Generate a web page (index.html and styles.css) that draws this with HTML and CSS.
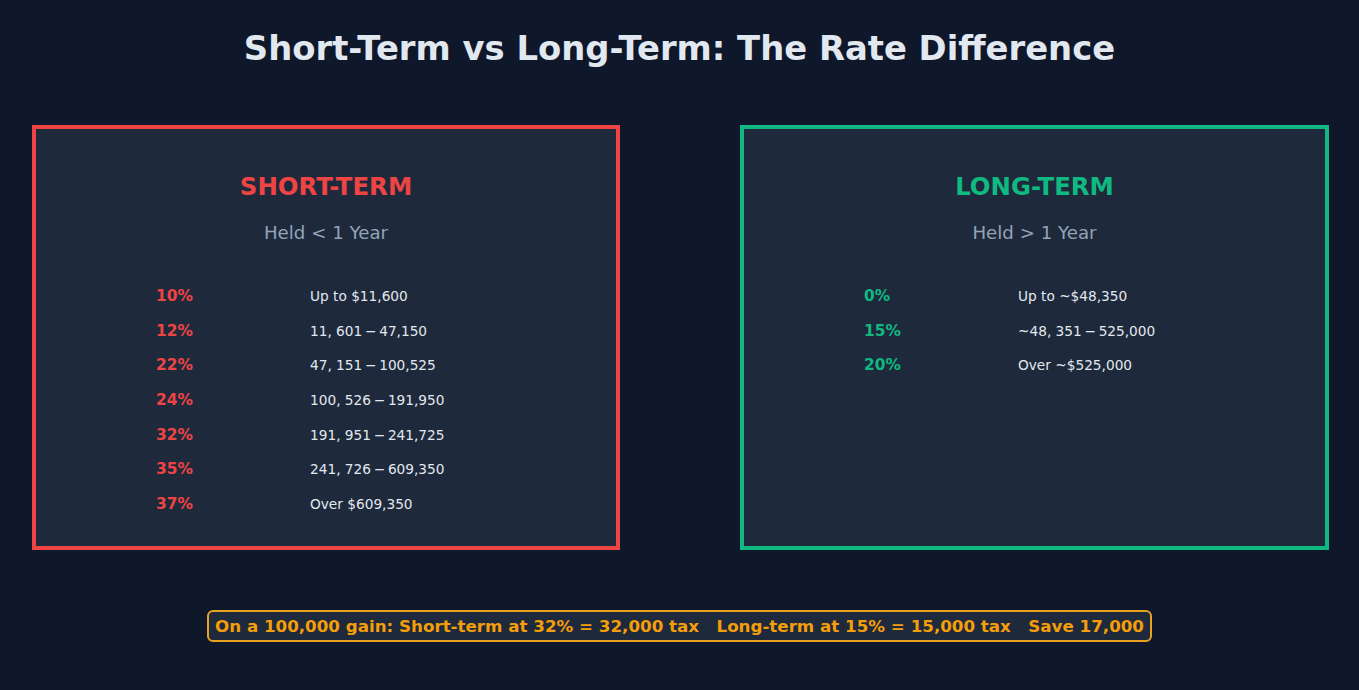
FILE: index.html
```html
<!DOCTYPE html>
<html>
<head>
<meta charset="utf-8">
<link rel="stylesheet" href="styles.css">
</head>
<body>
<div class="page">
  <h1 class="title">Short-Term vs Long-Term: The Rate Difference</h1>
  <div class="boxes">
    <section class="box box-short">
      <div class="heading">SHORT-TERM</div>
      <div class="sub">Held &lt; 1 Year</div>
      <div class="rows">
        <div class="row"><span class="pct">10%</span><span class="desc">Up to $11,600</span></div>
        <div class="row"><span class="pct">12%</span><span class="desc">11, 601&#8201;−&#8201;47,150</span></div>
        <div class="row"><span class="pct">22%</span><span class="desc">47, 151&#8201;−&#8201;100,525</span></div>
        <div class="row"><span class="pct">24%</span><span class="desc">100, 526&#8201;−&#8201;191,950</span></div>
        <div class="row"><span class="pct">32%</span><span class="desc">191, 951&#8201;−&#8201;241,725</span></div>
        <div class="row"><span class="pct">35%</span><span class="desc">241, 726&#8201;−&#8201;609,350</span></div>
        <div class="row"><span class="pct">37%</span><span class="desc">Over $609,350</span></div>
      </div>
    </section>
    <section class="box box-long">
      <div class="heading">LONG-TERM</div>
      <div class="sub">Held &gt; 1 Year</div>
      <div class="rows">
        <div class="row"><span class="pct">0%</span><span class="desc">Up to ~$48,350</span></div>
        <div class="row"><span class="pct">15%</span><span class="desc">~48, 351&#8201;−&#8201;525,000</span></div>
        <div class="row"><span class="pct">20%</span><span class="desc">Over ~$525,000</span></div>
      </div>
    </section>
  </div>
  <div class="banner-wrap">
    <div class="banner">On a 100,000 gain: Short-term at 32% = 32,000 tax   Long-term at 15% = 15,000 tax   Save 17,000</div>
  </div>
</div>
</body>
</html>
```
FILE: styles.css
```css
html, body {
  margin: 0;
  padding: 0;
  background: #0f172a;
}
body {
  font-family: "DejaVu Sans", "Liberation Sans", sans-serif;
  color: #e2e8f0;
}
.page {
  width: 1359px;
  height: 690px;
  display: flex;
  flex-direction: column;
  overflow: hidden;
}
.title {
  margin: 0;
  padding-top: 31px;
  height: 36px;
  line-height: 36px;
  font-size: 33.8px;
  font-weight: bold;
  text-align: center;
  color: #e2e8f0;
}
.boxes {
  margin-top: 58px;
  padding-left: 32px;
  display: flex;
  gap: 120px;
}
.box {
  box-sizing: border-box;
  height: 425px;
  border: 4px solid;
  background: #1e293b;
  padding-top: 45px;
}
.box-short {
  width: 588px;
  border-color: #ef4444;
}
.box-long {
  width: 589px;
  border-color: #10b981;
}
.heading {
  font-size: 24.4px;
  line-height: 26px;
  font-weight: bold;
  text-align: center;
}
.box-short .heading, .box-short .pct { color: #ef4444; }
.box-long .heading, .box-long .pct { color: #10b981; }
.sub {
  margin-top: 23px;
  font-size: 18.2px;
  line-height: 20px;
  text-align: center;
  color: #94a3b8;
}
.rows {
  margin-top: 35.6px;
  padding-left: 120px;
}
.row {
  display: flex;
  align-items: center;
  height: 34.67px;
}
.pct {
  width: 154px;
  font-size: 15.4px;
  font-weight: bold;
}
.desc {
  font-size: 13.7px;
  color: #e2e8f0;
  white-space: pre;
}
.banner-wrap {
  margin-top: 60px;
  display: flex;
  justify-content: center;
}
.banner {
  box-sizing: border-box;
  height: 32px;
  line-height: 28px;
  padding: 0 6px;
  border: 2px solid #e9a21f;
  border-radius: 6px;
  background: #1e293b;
  color: #f59e0b;
  font-size: 16.7px;
  font-weight: bold;
  white-space: pre;
}
```
